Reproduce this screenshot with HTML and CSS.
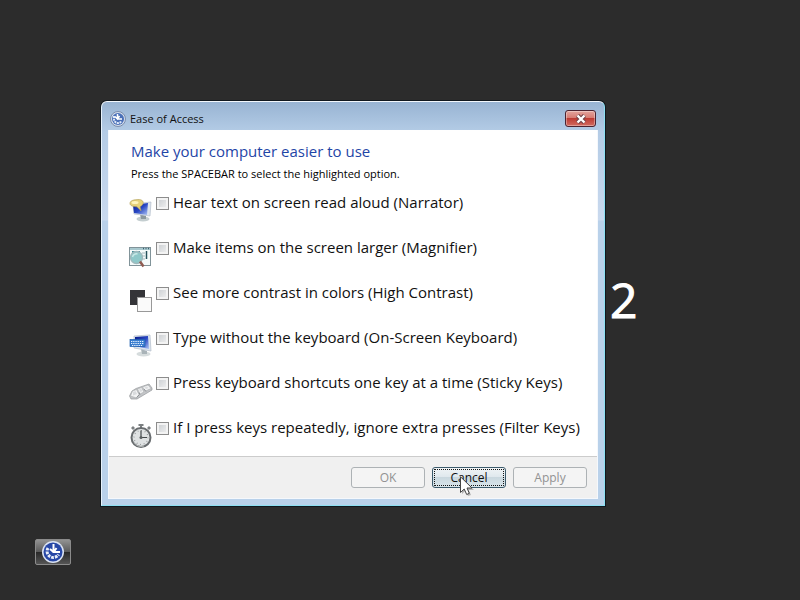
FILE: index.html
```html
<!doctype html>
<html lang="en">
<head>
<meta charset="utf-8">
<title>Ease of Access</title>
<link rel="stylesheet" href="styles.css">
</head>

<body>
	<div class="version" aria-hidden="true">2</div>

	<form class="window" role="dialog" aria-labelledby="caption">
		<div class="titlebar">
			<svg class="caption-icon" viewBox="0 0 16 16">
				<circle cx="8" cy="8" r="7.500" fill="#d5deeb" stroke="#7a8dae"/>
				<circle cx="8" cy="8" r="6" fill="#4a70b8"/>
				<path d="M4 5v3a4 4 0 0 0 7.500 2" fill="none" stroke="#dfe8f7" stroke-width="2" stroke-dasharray="2 .7"/>
				<path d="M7.500 3v5H12M5 5.500L7.500 8l2-3" fill="none" stroke="#fff" stroke-width="1.500"/>
			</svg>
			<span class="caption" id="caption">Ease of Access</span>
			<button class="close" type="button" aria-label="Close">
				<svg viewBox="0 0 12 10">
					<path d="M2.500 1.500l7 7M9.500 1.500l-7 7" stroke="#70444a" stroke-width="4.400"/>
					<path d="M2.500 1.500l7 7M9.500 1.500l-7 7" stroke="#fff" stroke-width="2.400"/>
				</svg>
			</button>
		</div>
		<div class="client">
			<div class="main">
				<h1>Make your computer easier to use</h1>
				<p>Press the SPACEBAR to select the highlighted option.</p>
				<ul class="options">
					<li>
						<svg class="icon" viewBox="0 0 24 24">
							<defs>
								<linearGradient id="screen" x1="0" y1="0" x2="1" y2="1">
									<stop offset="0" stop-color="#061a86"/>
									<stop offset=".5" stop-color="#2a48c4"/>
									<stop offset="1" stop-color="#b0c8f4"/>
								</linearGradient>
							</defs>
							<ellipse cx="14" cy="20" rx="6.500" ry="2.500" fill="#c4ced0"/>
							<path d="M11 15l6 2v3h-5z" fill="#8c999e"/>
							<path d="M4 5l18-2-1 14-16-2z" fill="#dde5ee" stroke="#b3bdca" stroke-width=".7"/>
							<path d="M4 6l15-2-1 12-13-2z" fill="url(#screen)"/>
							<path d="M7 .800c5-1 8 1 7 4-1 2-2 2-3 3l1 4-4-4C3 7.500 1 6.500 1 4.300 1 2 4 .800 7 .800z" fill="#e6d27a" stroke="#b5a25a" stroke-width=".7"/>
							<ellipse cx="6" cy="3.500" rx="3.500" ry="1.500" fill="#fff5bd"/>
						</svg>
						<input type="checkbox" id="narrator"><label for="narrator">Hear text on screen read aloud (Narrator)</label>
					</li>
					<li>
						<svg class="icon" viewBox="0 0 24 24">
							<rect x=".5" y="3.500" width="21" height="18" fill="#f5fbfb" stroke="#819399"/>
							<path d="M1 5h20" stroke="#a8c8ce" stroke-width="2"/>
							<path d="M14 4.500h1M16.500 4.500h1M19 4.500h1" stroke="#3c6271" stroke-width="1.500"/>
							<path d="M3 7h8v2H3z" fill="#3d8793"/>
							<path d="M13 9h3M13 12h3M13 15h3" stroke="#a6babf"/>
							<path d="M17.500 7v8" stroke="#25505b" stroke-width="1.500"/>
							<circle cx="7.500" cy="13.500" r="6" fill="#8ec8c9" stroke="#a0b8bc" stroke-width="1.300"/>
							<path d="M3.500 13a4 4 0 0 1 5-3" fill="none" stroke="#c9e9e7" stroke-width="1.500"/>
							<path d="M11 17.500l3.500 5" stroke="#8f5c52" stroke-width="2.500"/>
						</svg>
						<input type="checkbox" id="magnifier"><label for="magnifier">Make items on the screen larger (Magnifier)</label>
					</li>
					<li>
						<svg class="icon" viewBox="0 0 24 24">
							<rect x="1" y="1" width="15" height="15" fill="#343438"/>
							<rect x="8.500" y="8.500" width="14" height="14" fill="#fafafa" stroke="#999"/>
						</svg>
						<input type="checkbox" id="contrast"><label for="contrast">See more contrast in colors (High Contrast)</label>
					</li>
					<li>
						<svg class="icon" viewBox="0 0 24 24">
							<ellipse cx="14.500" cy="20" rx="7" ry="2.500" fill="#d6dcdd"/>
							<path d="M12 15l6 2v3h-5z" fill="#a9b3b8"/>
							<path d="M5 2l16-1 1 16-17-3z" fill="#dde5ee" stroke="#b3bdca" stroke-width=".7"/>
							<path d="M6 3l13-1 1 13-14-3z" fill="url(#screen)"/>
							<rect x="1" y="5.500" width="15" height="7" fill="#3b7fd0" stroke="#2060b0" stroke-width=".7"/>
							<path d="M2 7.500h13M2 9.500h13M3 11.500h11" stroke="#e7f2ff" stroke-dasharray="1.300 .9"/>
						</svg>
						<input type="checkbox" id="keyboard"><label for="keyboard">Type without the keyboard (On-Screen Keyboard)</label>
					</li>
					<li>
						<svg class="icon" viewBox="0 0 24 24">
							<path d="M.5 17L3 12 7 9.500 20 5l3 4v2L8 20H2z" fill="#c3c5c8" stroke="#96999c" stroke-width=".7"/>
							<path d="M1.500 17l2-5 4-1.500 2.500 5-2.500 3.500zM8.500 10l4-1.500 2.500 4.500-4 2zM13.500 8l5.500-2 3 3.500-5.500 2.500z" fill="#f2f3f4" stroke="#a8abad" stroke-width=".6"/>
							<path d="M4 13l2.500-1 1.500 3-4 1.500zM10 10.500l2-1 1.500 2.500-2 1zM15.500 8.500l2.500-1 1.500 1.500-2.500 1z" fill="#d9dbdd"/>
							<path d="M7.500 18.500l3-3M11 15.500l-1-2M17 12.500l-2-2.500" stroke="#83878a" stroke-width=".8"/>
						</svg>
						<input type="checkbox" id="sticky"><label for="sticky">Press keyboard shortcuts one key at a time (Sticky Keys)</label>
					</li>
					<li>
						<svg class="icon" viewBox="0 0 24 24">
							<path d="M9.500 0h5v2h-5zM11 2h2v2h-2zM2 4l2-2 2 2-2 2zM18 4l2-2 2 2-2 2z" fill="#7b7f81"/>
							<circle cx="12" cy="13.500" r="9.500" fill="#dfe2e3" stroke="#686c6f" stroke-width="2"/>
							<circle cx="12" cy="13.500" r="7" fill="none" stroke="#8b9092" stroke-width="1.200" stroke-dasharray=".8 2.865"/>
							<path d="M12 6.500v7h6" fill="none" stroke="#44494b" stroke-width="1.200"/>
							<circle cx="12" cy="13.500" r="1.500" fill="#5c6163"/>
							<path d="M5 18.500a9 9 0 0 0 10 3.500" fill="none" stroke="#b7baba"/>
						</svg>
						<input type="checkbox" id="filter"><label for="filter">If I press keys repeatedly, ignore extra presses (Filter Keys)</label>
					</li>
				</ul>
			</div>
			<div class="footer">
				<button class="btn" type="submit" disabled>OK</button>
				<button class="btn focused" type="button">Cancel</button>
				<button class="btn" type="button" disabled>Apply</button>
			</div>
		</div>
	</form>

	<button class="access" type="button" aria-label="Ease of Access">
		<svg viewBox="0 0 24 24">
			<circle cx="12" cy="12" r="11" fill="#dce4f4"/>
			<circle cx="12" cy="12" r="9.500" fill="#2747a6"/>
			<path d="M7 8A6 6 0 1 0 17.500 14.500" fill="none" stroke="#e9effa" stroke-width="3" stroke-dasharray="2.600 1"/>
			<path d="M12.500 4v8H19M9 9l3.500 3M15.500 8l-2 3" fill="none" stroke="#fff" stroke-width="2"/>
		</svg>
	</button>

	<svg class="cursor" viewBox="0 0 14 20">
		<path d="M2 2v16l3.500-3.500L8 20l3-1-2.300-5H14z" fill="#000" opacity=".25"/>
		<path d="M.5.8v15.700L4.200 13l2.500 5.500 2.600-1.200L7 12h5z" fill="#fff" stroke="#444"/>
	</svg>
</body>
</html>
```
FILE: styles.css
```css
*{margin:0; padding:0; box-sizing:border-box; list-style:none;}
body{min-height:100vh; position:relative; overflow:hidden; background:#2c2c2c; color:#111; font:12px/16px "Open Sans","Noto Sans",sans-serif;}
svg{display:block;}
button{font:inherit;}

.version{position:absolute; left:610px; top:270px; font-size:48px; line-height:60px; color:#fff; -webkit-text-stroke:1px #fff;}

/* dialog */
.window{position:absolute; left:101px; top:101px; width:63%; padding:0 6px 6px; border:1px solid #8de0f2; border-top-color:#f2f7fc; border-left-color:#e7f2fb; border-radius:6px 6px 0 0; background:linear-gradient(#98b4d3,#b4cce6 30px,#c9d9ee 118px,#b9d1ea 119px); box-shadow:0 0 0 1px #10181f;}
.titlebar{display:flex; align-items:center; height:28px; padding:5px 2px 0;}
.caption-icon{width:16px; height:16px; margin-right:4px;}
.caption{flex:1; font-size:11px;}
.close{display:flex; align-items:center; justify-content:center; width:31px; height:17px; border:1px solid #4b2330; border-radius:3px; background:linear-gradient(#e3a49d,#d67a71 48%,#bd3c34 50%,#d26b60); box-shadow:inset 0 0 0 1px rgba(255,255,255,.35);}
.close svg{width:12px; height:10px;}

.client{border:1px solid #f5f8fc; border-top:0; background:#fff;}
.main{padding:11px 20px 4px;}
h1{padding-left:2px; font-size:15px; line-height:20px; font-weight:normal; color:#1f45a6;}
.main p{padding:5px 2px 0; font-size:11px; line-height:16px; color:#000;}
.options{padding-top:8px;}
.options li{display:flex; align-items:flex-start; height:45px; white-space:nowrap;}
.options li:last-child{height:37px;}
.icon{flex:none; width:24px; height:24px; margin-top:9px;}
.options input{flex:none; appearance:none; width:13px; height:13px; margin:7px 4px 0 3px; border:1px solid #8c8c8c; background:linear-gradient(135deg,#c7cbcf,#f3f3f3); box-shadow:inset 0 0 0 2px #f3f3f3;}
.options label{font-size:15px; line-height:24px;}

.footer{display:flex; justify-content:flex-end; gap:7px; padding:10px; border-top:1px solid #ccc; background:#f0f0f0;}
.btn{width:74px; height:21px; border:1px solid #adb2b5; border-radius:3px; background:#f4f4f4; line-height:19px; color:#111;}
.btn:disabled{color:#929292;}
.focused{border-color:#3c5a6b; background:linear-gradient(#f0f4f6,#dfe8ed 48%,#cad8df 50%,#d8e5eb); outline:1px dotted #111; outline-offset:-3px;}

.access{position:absolute; left:35px; bottom:35px; display:flex; align-items:center; justify-content:center; width:36px; height:26px; border:1px solid #8b8b8b; border-radius:2px; background:linear-gradient(#929292,#5c5c5c 48%,#282828 50%,#555);}
.access svg{width:24px; height:24px;}

.cursor{position:absolute; left:460px; top:476px; width:14px; height:20px;}
```
